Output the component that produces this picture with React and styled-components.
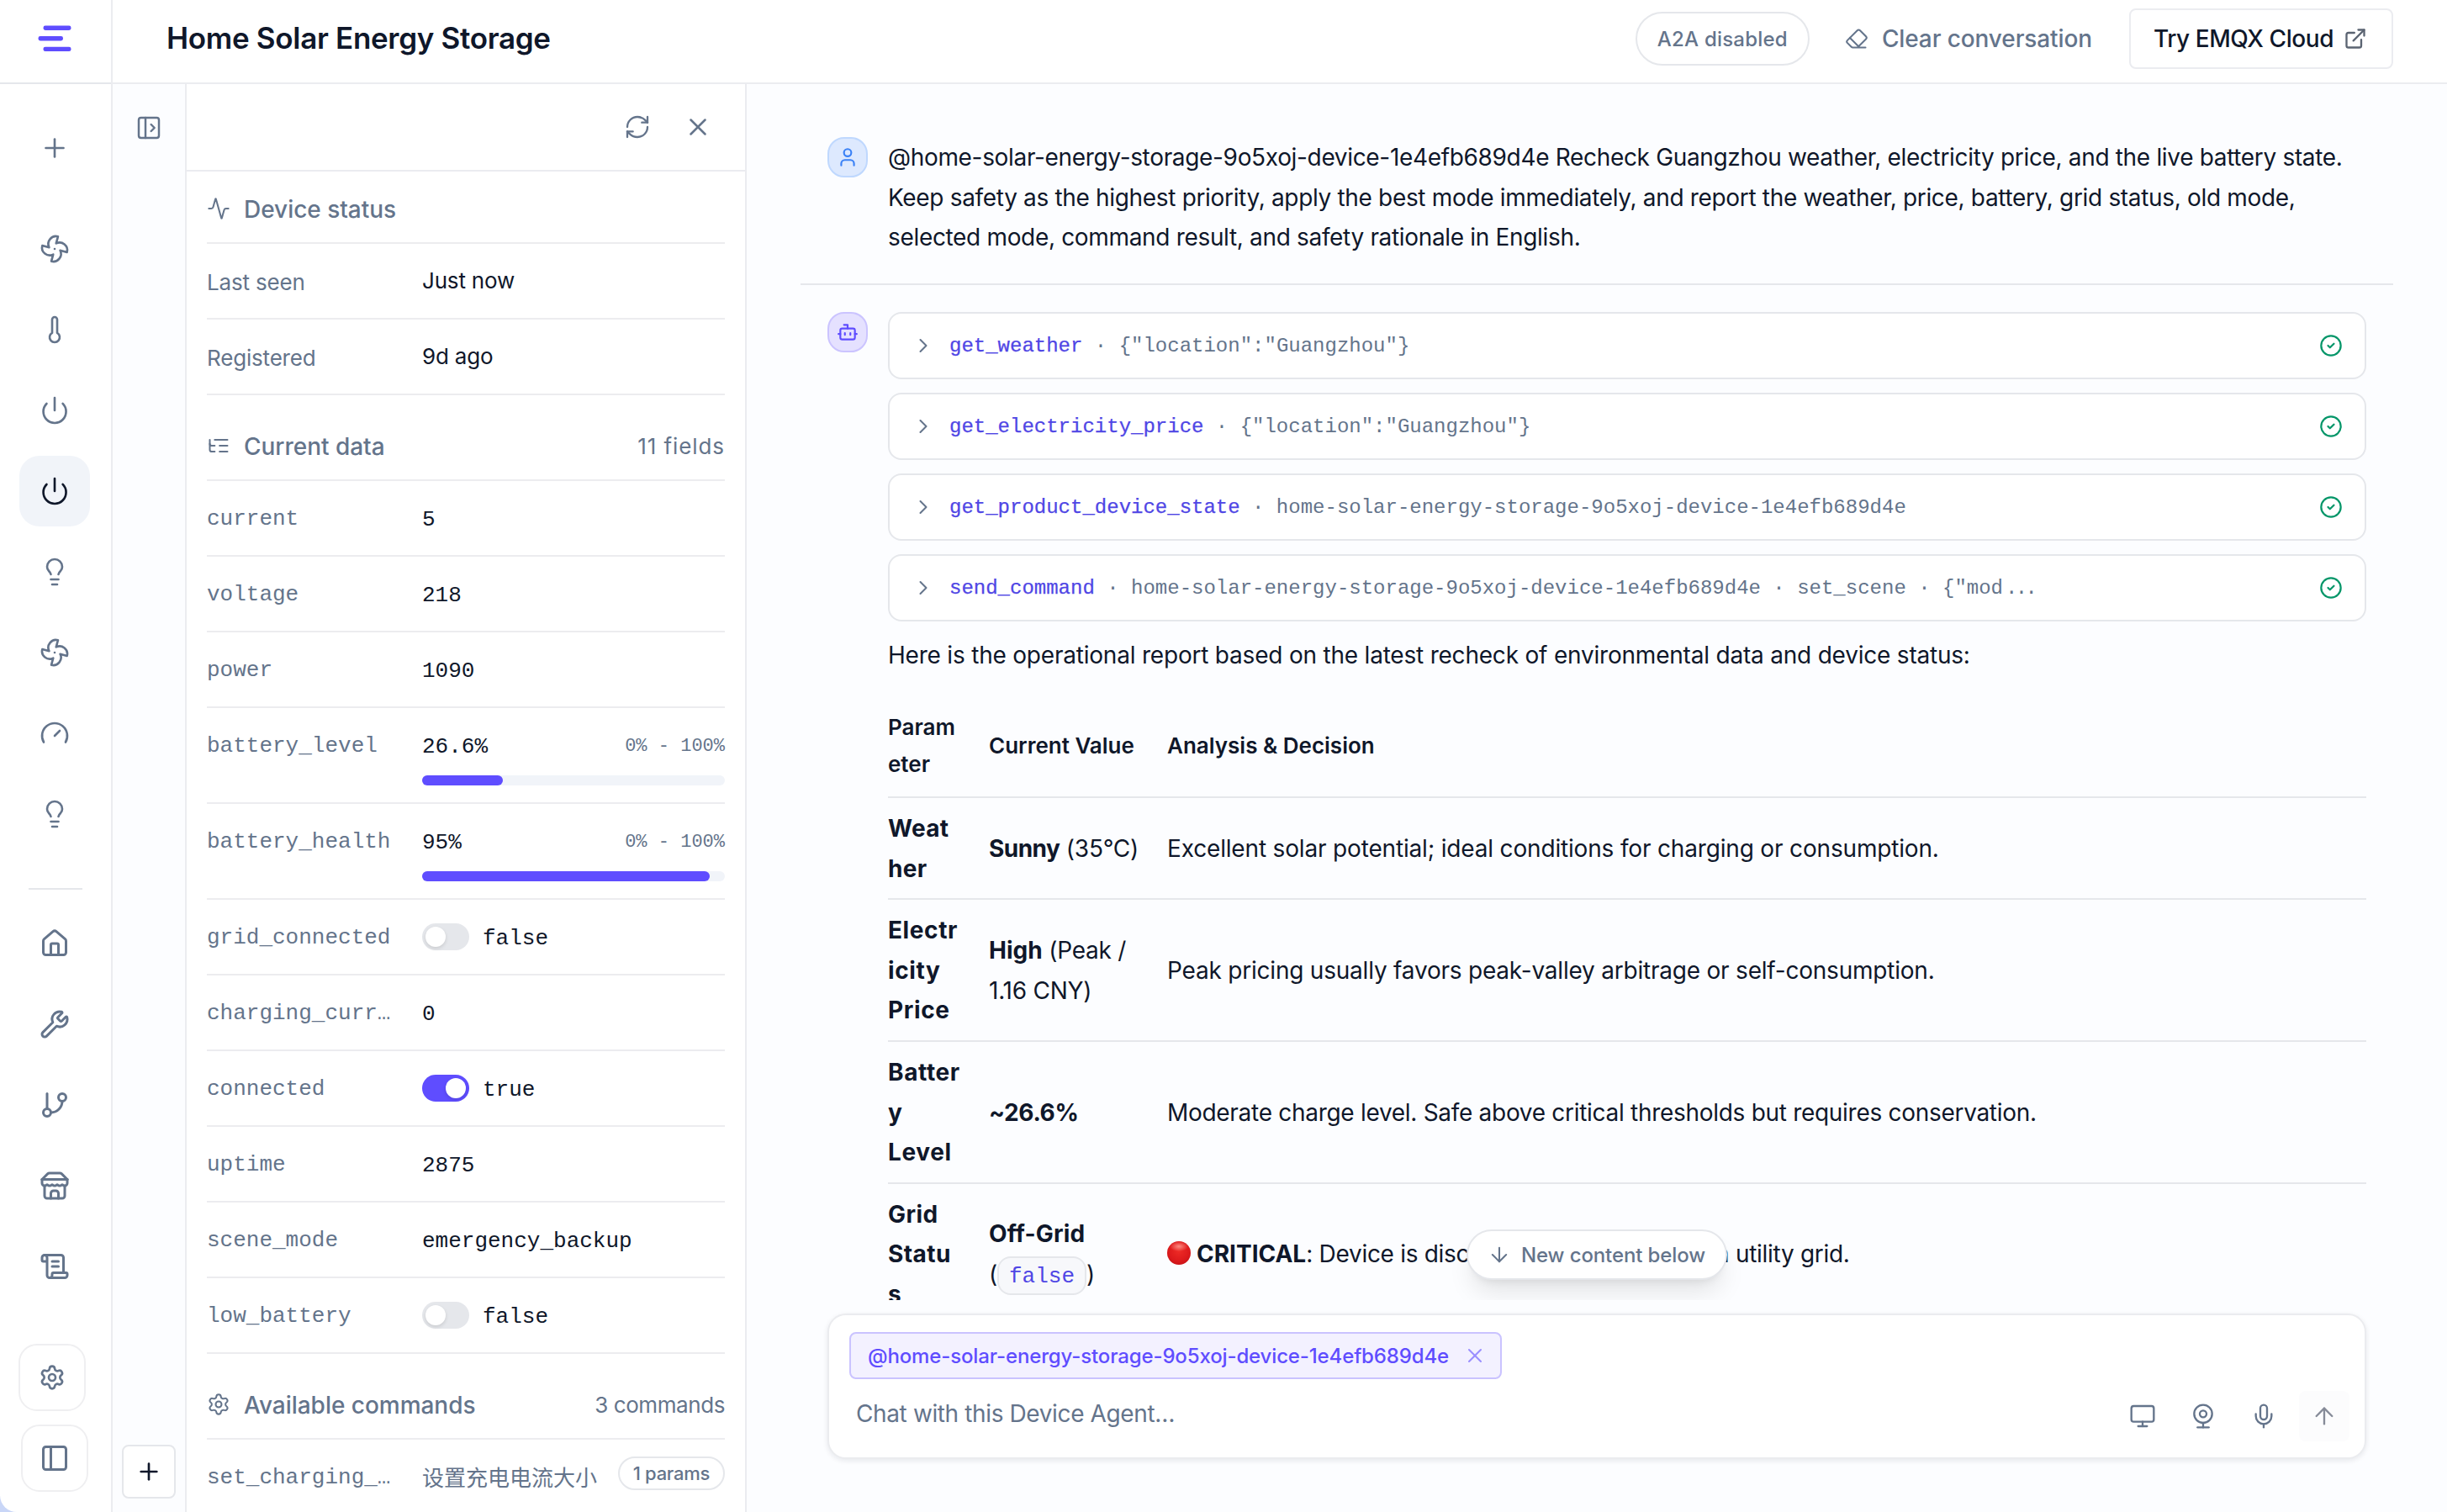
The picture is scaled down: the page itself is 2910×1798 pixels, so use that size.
import React from 'react';
import styled, { createGlobalStyle } from 'styled-components';
import {
  Activity,
  ArrowDown,
  ArrowUp,
  Bot,
  ChevronRight,
  CircleCheck,
  Eraser,
  ExternalLink,
  Fan,
  Gauge,
  House,
  Lightbulb,
  Mic,
  Monitor,
  PanelLeft,
  PanelLeftOpen,
  Plus,
  Power,
  RefreshCw,
  ScrollText,
  Settings,
  Thermometer,
  User,
  Webcam,
  Wrench,
  X,
} from 'lucide-react';

const sans = "'Inter', 'Noto Sans CJK SC', sans-serif";
const mono = "'Liberation Mono', 'Noto Sans CJK SC', monospace";

const color = {
  ink: '#0f172a',
  muted: '#64748b',
  accent: '#5f4dff',
  link: '#4f46e5',
  line: '#e5e7eb',
  softLine: '#ebecf0',
  canvas: '#fcfdff',
  track: '#f1f4f9',
  ok: '#059669',
};

const GlobalStyle = createGlobalStyle`
  * {
    box-sizing: border-box;
  }

  body {
    margin: 0;
    background: #c9d6f7;
    color: ${color.ink};
    font-family: ${sans};
    -webkit-font-smoothing: antialiased;
  }

  svg {
    display: block;
    flex-shrink: 0;
  }
`;

const Shell = styled.div`
  display: flex;
  height: 1798px;
  width: 2910px;
  overflow: hidden;
  background: #fff;
  border-bottom-left-radius: 20px;
`;

/* ---------- sidebar ---------- */

const Sidebar = styled.nav`
  display: flex;
  flex-direction: column;
  width: 134px;
  flex-shrink: 0;
  border-right: 2px solid ${color.softLine};
`;

const LogoBox = styled.div`
  display: flex;
  align-items: center;
  justify-content: center;
  height: 100px;
  padding: 0 2px 6px 0;
  border-bottom: 2px solid ${color.line};
`;

const NavList = styled.div`
  display: flex;
  flex-direction: column;
  align-items: center;
  gap: 12px;
  width: 130px;
  padding-top: ${(p) => p.$top}px;
`;

const NavItem = styled.button`
  display: flex;
  align-items: center;
  justify-content: center;
  width: 84px;
  height: 84px;
  padding: 0;
  border: none;
  border-radius: 24px;
  background: ${(p) => (p.$active ? color.track : 'transparent')};
  color: ${(p) => (p.$active ? color.ink : color.muted)};
`;

const NavDivider = styled.div`
  width: 64px;
  height: 2px;
  margin: 46px 0 0 34px;
  background: ${color.line};
`;

const NavFooter = styled.div`
  display: flex;
  flex-direction: column;
  gap: 16px;
  margin-top: auto;
  padding: 0 0 24px 22px;
`;

const FooterButton = styled.button`
  display: flex;
  align-items: center;
  justify-content: center;
  width: 80px;
  height: 80px;
  margin-left: ${(p) => p.$shift || 0}px;
  padding: 0;
  border: 2px solid #efeff1;
  border-radius: 22px;
  background: #fff;
  color: ${color.muted};
`;

/* ---------- header ---------- */

const Main = styled.div`
  display: flex;
  flex-direction: column;
  flex: 1;
  min-width: 0;
`;

const Header = styled.header`
  display: flex;
  align-items: center;
  height: 100px;
  flex-shrink: 0;
  padding: 0 64px 6px 64px;
  border-bottom: 2px solid ${color.softLine};
`;

const Title = styled.h1`
  margin: -2px auto 0 0;
  font-size: 35px;
  font-weight: 600;
  line-height: 48px;
  letter-spacing: -0.009em;
`;

const StatusPill = styled.span`
  display: flex;
  align-items: center;
  height: 64px;
  padding: 0 24px;
  border: 2px solid ${color.line};
  border-radius: 32px;
  color: ${color.muted};
  font-size: 24px;
  font-weight: 500;
  letter-spacing: 0.009em;
`;

const ClearButton = styled.button`
  display: flex;
  align-items: center;
  gap: 16px;
  margin: 0 44px 0 42px;
  padding: 0;
  border: none;
  background: none;
  color: ${color.muted};
  font: 500 28px ${sans};
  letter-spacing: -0.004em;
`;

const CloudButton = styled.button`
  display: flex;
  align-items: center;
  gap: 12px;
  width: 314px;
  height: 72px;
  padding: 0 0 0 27px;
  border: 2px solid ${color.softLine};
  border-radius: 8px;
  background: #fff;
  color: ${color.ink};
  font: 500 28px ${sans};
  letter-spacing: -0.0155em;

  svg {
    color: #5b6472;
  }
`;

/* ---------- device panel ---------- */

const Body = styled.div`
  display: flex;
  flex: 1;
  min-height: 0;
`;

const Rail = styled.div`
  display: flex;
  flex-direction: column;
  align-items: center;
  justify-content: space-between;
  width: 88px;
  flex-shrink: 0;
  padding: 36px 0 16px;
  border-right: 2px solid ${color.softLine};
  background: ${color.canvas};
  color: ${color.muted};
`;

const AddButton = styled.button`
  display: flex;
  align-items: center;
  justify-content: center;
  width: 64px;
  height: 64px;
  padding: 0;
  border: 2px solid ${color.line};
  border-radius: 8px;
  background: #fff;
  color: ${color.ink};
`;

const Panel = styled.aside`
  width: 666px;
  flex-shrink: 0;
  overflow: hidden;
  border-right: 2px solid ${color.softLine};
`;

const PanelBar = styled.div`
  display: flex;
  align-items: center;
  justify-content: flex-end;
  gap: 39px;
  height: 104px;
  padding-right: 39px;
  border-bottom: 2px solid ${color.softLine};
  color: ${color.muted};
`;

const Section = styled.section`
  padding: ${(p) => (p.$first ? 24 : 40)}px 24px 0;
`;

const SectionHead = styled.div`
  display: flex;
  align-items: center;
  height: 62px;
  padding-bottom: 20px;
  border-bottom: 2px solid #ececef;
  color: ${color.muted};
`;

const SectionTitle = styled.h2`
  margin: 1px auto 0 16px;
  font-size: 28px;
  font-weight: 500;
  letter-spacing: -0.001em;
`;

const SectionCount = styled.span`
  font-size: 26px;
  letter-spacing: ${(p) => p.$tracking}em;
`;

const Row = styled.div`
  display: grid;
  grid-template-columns: 224px 360px;
  column-gap: 32px;
  padding: 24px 0 ${(p) => (p.$bar ? 20 : 24)}px;
  border-bottom: 2px solid #ececef;
  font-family: ${(p) => (p.$plain ? sans : mono)};
  font-size: 26px;
  line-height: 40px;
  letter-spacing: ${(p) => (p.$plain ? '-0.007em' : 0)};
`;

const Label = styled.span`
  margin-bottom: -3px;
  overflow: hidden;
  color: ${color.muted};
  line-height: 43px;
  text-overflow: ellipsis;
  white-space: nowrap;
`;

const Value = styled.div`
  display: flex;
  align-items: center;
  height: 40px;
  gap: 16px;
`;

const ValueText = styled.span`
  margin-top: 3px;
`;

const Range = styled.span`
  margin: 3px 0 0 auto;
  color: ${color.muted};
  font-size: 22px;
`;

const Track = styled.div`
  height: 12px;
  margin-top: 16px;
  border-radius: 6px;
  background: ${color.track};
`;

const Fill = styled.div`
  height: 12px;
  border-radius: 6px;
  background: ${color.accent};
`;

const Switch = styled.span`
  display: flex;
  justify-content: ${(p) => (p.$on ? 'flex-end' : 'flex-start')};
  width: 56px;
  height: 32px;
  padding: 4px;
  border-radius: 16px;
  background: ${(p) => (p.$on ? color.accent : color.line)};

  &::after {
    content: '';
    width: 24px;
    height: 24px;
    border-radius: 50%;
    background: #fff;
    box-shadow: 0 2px 4px rgba(0, 0, 0, 0.12);
  }
`;

const CommandText = styled.span`
  width: 210px;
  color: ${color.muted};
  font-family: 'Noto Sans CJK SC', sans-serif;
  white-space: nowrap;
`;

const ParamsPill = styled.span`
  display: flex;
  align-items: center;
  height: 40px;
  margin: -8px 0 0 auto;
  padding: 0 16px;
  border: 2px solid ${color.line};
  border-radius: 20px;
  color: ${color.muted};
  font: 500 22px ${sans};
  letter-spacing: -0.013em;
  white-space: nowrap;
`;

/* ---------- conversation ---------- */

const Chat = styled.main`
  display: flex;
  flex-direction: column;
  flex: 1;
  min-width: 0;
  background: ${color.canvas};
`;

const Thread = styled.div`
  position: relative;
  height: 1446px;
  padding: 63px 64px 0;
  overflow: hidden;
`;

const Message = styled.article`
  display: flex;
  gap: 24px;
  padding: 0 32px;

  & + & {
    padding-top: 32px;
    border-top: 2px solid ${color.line};
  }
`;

const Avatar = styled.div`
  display: flex;
  align-items: center;
  justify-content: center;
  width: 48px;
  height: 48px;
  flex-shrink: 0;
  border: 2px solid ${(p) => (p.$bot ? '#cbc4ff' : '#bfd8fe')};
  border-radius: 20px;
  background: ${(p) => (p.$bot ? '#e5e1ff' : '#dde9fe')};
  color: ${(p) => (p.$bot ? color.accent : '#3b82f6')};
`;

const Bubble = styled.div`
  flex: 1;
  min-width: 0;
  font-size: 28px;
  line-height: 47.6px;
`;

const Prompt = styled.p`
  margin: 0;
  padding: 1px 0 30.2px;
  letter-spacing: -0.0118em;
`;

const ToolCall = styled.div`
  display: flex;
  align-items: center;
  height: 80px;
  margin-bottom: 16px;
  padding: 0 26px;
  border: 2px solid ${color.line};
  border-radius: 16px;
  background: #fff;
  color: ${color.muted};
  font-family: ${mono};
  font-size: 24px;
  line-height: 40px;
  white-space: pre;

  svg:last-child {
    margin-left: auto;
    color: ${color.ok};
  }
`;

const ToolName = styled.span`
  margin: 3px 0 0 17px;
  color: ${color.link};
  -webkit-text-stroke: 0.25px ${color.link};
`;

const ToolArgs = styled.span`
  margin-top: 3px;
`;

const Ellipsis = styled.span`
  margin: 3px 0 0 3px;
  letter-spacing: -2.6px;
`;

const Report = styled.p`
  margin: 0;
  padding: 1px 0 23px;
  letter-spacing: -0.0074em;
`;

const Table = styled.table`
  width: 100%;
  border-collapse: collapse;
  table-layout: fixed;

  th,
  td {
    border-bottom: 2px solid ${color.line};
    text-align: left;
    vertical-align: middle;
    white-space: pre-line;
  }
`;

const Col = styled.col`
  width: ${(p) => p.$width};
`;

const HeadCell = styled.th`
  padding: 16px 16px 16px 0;
  font-size: 26px;
  font-weight: 600;
  line-height: 44.2px;
`;

const Cell = styled.td`
  padding: 13px 16px 11px 0;
  letter-spacing: ${(p) => p.$tracking ?? -0.0085}em;
`;

const Strong = styled.strong`
  font-weight: 700;
  letter-spacing: ${(p) => p.$tracking || 0}em;
`;

const Code = styled.code`
  display: inline-block;
  height: 46px;
  padding: 2px 12px 0;
  border: 2px solid ${color.line};
  border-radius: 16px;
  background: #f7f8fb;
  color: ${color.link};
  font-family: ${mono};
  font-size: 26px;
  line-height: 40px;
  letter-spacing: 0;
`;

const RedDot = styled.i`
  display: inline-block;
  width: 28px;
  height: 28px;
  margin-right: 7px;
  border-radius: 50%;
  background:
    radial-gradient(ellipse 11px 6px at 50% 22%, rgba(255, 150, 140, 0.9), rgba(255, 120, 110, 0) 100%),
    radial-gradient(circle at 50% 40%, #ee2b26 0%, #dd1a1c 55%, #b90d14 100%);
  vertical-align: -3px;
`;

const JumpButton = styled.button`
  position: absolute;
  bottom: 24px;
  left: 50%;
  display: flex;
  align-items: center;
  gap: 12px;
  width: 310px;
  height: 60px;
  padding: 0 0 0 23px;
  transform: translateX(-50%);
  border: 2px solid ${color.line};
  border-radius: 30px;
  background: #fff;
  box-shadow: 0 20px 30px -6px rgba(0, 0, 0, 0.1), 0 8px 12px -8px rgba(0, 0, 0, 0.1);
  color: ${color.muted};
  font: 500 24px ${sans};
  letter-spacing: -0.005em;
  white-space: nowrap;
`;

/* ---------- composer ---------- */

const Composer = styled.div`
  display: flex;
  flex-direction: column;
  align-items: flex-start;
  height: 173px;
  margin: 16px 96px 0;
  padding: 20px 18px 0 24px;
  border: 2px solid #ebecef;
  border-radius: 22px;
  background: #fff;
  box-shadow: 0 2px 6px rgba(15, 23, 42, 0.09);
`;

const Mention = styled.span`
  display: flex;
  align-items: center;
  justify-content: space-between;
  width: 776px;
  height: 56px;
  padding: 0 16px 0 20px;
  border: 2px solid #cac3ff;
  border-radius: 8px;
  background: #f3f1ff;
  color: ${color.accent};
  font-size: 24px;
  font-weight: 500;
  letter-spacing: -0.0057em;

  svg {
    color: #9a8fff;
  }
`;

const ComposerRow = styled.div`
  display: flex;
  align-items: center;
  gap: 12px;
  width: 100%;
  padding-top: 14px;
`;

const Placeholder = styled.span`
  margin: -6px auto 0 8px;
  color: ${color.muted};
  font-size: 28px;
  letter-spacing: -0.0135em;
`;

const ToolButton = styled.button`
  display: flex;
  align-items: center;
  justify-content: center;
  width: 60px;
  height: 60px;
  padding: 0;
  border: none;
  border-radius: 8px;
  background: ${(p) => (p.$send ? '#fcfcfd' : 'transparent')};
  color: ${(p) => (p.$send ? '#868b98' : color.muted)};
`;

/* ---------- icons ---------- */

function LineIcon({ size = 24, strokeWidth = 2, children }) {
  return (
    <svg
      width={size}
      height={size}
      viewBox="0 0 24 24"
      fill="none"
      stroke="currentColor"
      strokeWidth={strokeWidth}
      strokeLinecap="round"
      strokeLinejoin="round"
    >
      {children}
    </svg>
  );
}

const BranchIcon = (props) => (
  <LineIcon {...props}>
    <path d="M6 3v12" />
    <circle cx="18" cy="6" r="3" />
    <circle cx="6" cy="18" r="3" />
    <path d="M18 9a9 9 0 0 1-9 9" />
  </LineIcon>
);

const StoreIcon = (props) => (
  <LineIcon {...props}>
    <path d="m2 7 4.41-4.41A2 2 0 0 1 7.83 2h8.34a2 2 0 0 1 1.42.59L22 7" />
    <path d="M4 12v8a2 2 0 0 0 2 2h12a2 2 0 0 0 2-2v-8" />
    <path d="M15 22v-4a2 2 0 0 0-2-2h-2a2 2 0 0 0-2 2v4" />
    <path d="M2 7h20" />
    <path d="M22 7v3a2 2 0 0 1-2 2a2.7 2.7 0 0 1-1.59-.63.7.7 0 0 0-.82 0A2.7 2.7 0 0 1 16 12a2.7 2.7 0 0 1-1.59-.63.7.7 0 0 0-.82 0A2.7 2.7 0 0 1 12 12a2.7 2.7 0 0 1-1.59-.63.7.7 0 0 0-.82 0A2.7 2.7 0 0 1 8 12a2.7 2.7 0 0 1-1.59-.63.7.7 0 0 0-.82 0A2.7 2.7 0 0 1 4 12a2 2 0 0 1-2-2V7" />
  </LineIcon>
);

const TreeIcon = (props) => (
  <LineIcon {...props}>
    <path d="M21 12h-8" />
    <path d="M21 6H8" />
    <path d="M21 18h-8" />
    <path d="M3 6v4c0 1.1.9 2 2 2h3" />
    <path d="M3 10v6c0 1.1.9 2 2 2h3" />
  </LineIcon>
);

const Logo = () => (
  <svg width="40" height="32" viewBox="0 0 40 32" fill={color.accent}>
    <rect x="6.5" y="0.5" width="33" height="5.4" rx="2.4" />
    <rect x="0.5" y="13" width="29.5" height="5.4" rx="2.4" />
    <rect x="6.5" y="25.7" width="33" height="5.4" rx="2.4" />
  </svg>
);

const devices = [Fan, Thermometer, Power, Power, Lightbulb, Fan, Gauge, Lightbulb];
const pages = [House, Wrench, BranchIcon, StoreIcon, ScrollText];
const activeDevice = 3;

const fields = [
  { name: 'current', value: '5' },
  { name: 'voltage', value: '218' },
  { name: 'power', value: '1090' },
  { name: 'battery_level', value: '26.6%', percent: 26.6 },
  { name: 'battery_health', value: '95%', percent: 95 },
  { name: 'grid_connected', value: false },
  { name: 'charging_current', value: '0' },
  { name: 'connected', value: true },
  { name: 'uptime', value: '2875' },
  { name: 'scene_mode', value: 'emergency_backup' },
  { name: 'low_battery', value: false },
];

const toolCalls = [
  { name: 'get_weather', args: ' · {"location":"Guangzhou"}' },
  { name: 'get_electricity_price', args: ' · {"location":"Guangzhou"}' },
  { name: 'get_product_device_state', args: ' · home-solar-energy-storage-9o5xoj-device-1e4efb689d4e' },
  {
    name: 'send_command',
    args: ' · home-solar-energy-storage-9o5xoj-device-1e4efb689d4e · set_scene · {"mod',
    cut: true,
  },
];

function Field({ name, value, percent }) {
  const hasBar = percent !== undefined;
  const isBool = typeof value === 'boolean';

  return (
    <Row $bar={hasBar}>
      <Label>{name}</Label>
      <div>
        <Value>
          {isBool && <Switch $on={value} />}
          <ValueText>{String(value)}</ValueText>
          {hasBar && <Range>0% - 100%</Range>}
        </Value>
        {hasBar && (
          <Track>
            <Fill style={{ width: `${percent}%` }} />
          </Track>
        )}
      </div>
    </Row>
  );
}

function DevicePanel() {
  return (
    <Panel>
      <PanelBar>
        <RefreshCw size={32} strokeWidth={1.75} />
        <X size={34} strokeWidth={1.75} />
      </PanelBar>

      <Section $first>
        <SectionHead>
          <Activity size={28} strokeWidth={1.75} />
          <SectionTitle>Device status</SectionTitle>
        </SectionHead>
        <Row $plain>
          <Label>Last seen</Label>
          <Value>Just now</Value>
        </Row>
        <Row $plain>
          <Label>Registered</Label>
          <Value>9d ago</Value>
        </Row>
      </Section>

      <Section>
        <SectionHead>
          <TreeIcon size={28} strokeWidth={1.75} />
          <SectionTitle>Current data</SectionTitle>
          <SectionCount $tracking={0.035}>11 fields</SectionCount>
        </SectionHead>
        {fields.map((field) => (
          <Field key={field.name} {...field} />
        ))}
      </Section>

      <Section>
        <SectionHead>
          <Settings size={28} strokeWidth={1.75} />
          <SectionTitle>Available commands</SectionTitle>
          <SectionCount $tracking={-0.016}>3 commands</SectionCount>
        </SectionHead>
        <Row>
          <Label>set_charging_current</Label>
          <Value>
            <CommandText>设置充电电流大小</CommandText>
            <ParamsPill>1 params</ParamsPill>
          </Value>
        </Row>
      </Section>
    </Panel>
  );
}

function ReportTable() {
  return (
    <Table>
      <colgroup>
        <Col $width="120px" />
        <Col $width="212px" />
        <Col $width="auto" />
      </colgroup>
      <thead>
        <tr>
          <HeadCell>{'Param\neter'}</HeadCell>
          <HeadCell>Current Value</HeadCell>
          <HeadCell>Analysis &amp; Decision</HeadCell>
        </tr>
      </thead>
      <tbody>
        <tr>
          <Cell><Strong $tracking={0.01}>{'Weat\nher'}</Strong></Cell>
          <Cell><Strong $tracking={-0.02}>Sunny</Strong> (35°C)</Cell>
          <Cell $tracking={-0.006}>
            Excellent solar potential; ideal conditions for charging or consumption.
          </Cell>
        </tr>
        <tr>
          <Cell><Strong $tracking={0.022}>{'Electr\nicity\nPrice'}</Strong></Cell>
          <Cell><Strong>High</Strong>{' (Peak /\n1.16 CNY)'}</Cell>
          <Cell $tracking={-0.0075}>
            Peak pricing usually favors peak-valley arbitrage or self-consumption.
          </Cell>
        </tr>
        <tr>
          <Cell><Strong $tracking={0.022}>{'Batter\ny\nLevel'}</Strong></Cell>
          <Cell><Strong $tracking={-0.012}>~26.6%</Strong></Cell>
          <Cell $tracking={-0.0105}>
            Moderate charge level. Safe above critical thresholds but requires conservation.
          </Cell>
        </tr>
        <tr>
          <Cell><Strong $tracking={0.015}>{'Grid\nStatu\ns'}</Strong></Cell>
          <Cell><Strong $tracking={0.005}>Off-Grid</Strong>{'\n('}<Code>false</Code>)</Cell>
          <Cell $tracking={-0.0105}>
            <RedDot /><Strong>CRITICAL</Strong>: Device is disconnected from the main utility grid.
          </Cell>
        </tr>
      </tbody>
    </Table>
  );
}

function Conversation() {
  return (
    <Chat>
      <Thread>
        <Message>
          <Avatar>
            <User size={26} />
          </Avatar>
          <Bubble>
            <Prompt>
              @home-solar-energy-storage-9o5xoj-device-1e4efb689d4e Recheck Guangzhou weather, electricity price,
              and the live battery state. Keep safety as the highest priority, apply the best mode immediately, and
              report the weather, price, battery, grid status, old mode, selected mode, command result, and safety
              rationale in English.
            </Prompt>
          </Bubble>
        </Message>
        <Message>
          <Avatar $bot>
            <Bot size={26} />
          </Avatar>
          <Bubble>
            {toolCalls.map((call) => (
              <ToolCall key={call.name}>
                <ChevronRight size={28} strokeWidth={1.75} />
                <ToolName>{call.name}</ToolName>
                <ToolArgs>{call.args}</ToolArgs>
                {call.cut && <Ellipsis>...</Ellipsis>}
                <CircleCheck size={28} strokeWidth={1.9} />
              </ToolCall>
            ))}
            <Report>
              Here is the operational report based on the latest recheck of environmental data and device status:
            </Report>
            <ReportTable />
          </Bubble>
        </Message>
        <JumpButton>
          <ArrowDown size={28} strokeWidth={1.75} />
          New content below
        </JumpButton>
      </Thread>

      <Composer>
        <Mention>
          @home-solar-energy-storage-9o5xoj-device-1e4efb689d4e
          <X size={28} strokeWidth={1.75} />
        </Mention>
        <ComposerRow>
          <Placeholder>Chat with this Device Agent…</Placeholder>
          <ToolButton><Monitor size={32} strokeWidth={1.75} /></ToolButton>
          <ToolButton><Webcam size={32} strokeWidth={1.75} /></ToolButton>
          <ToolButton><Mic size={32} strokeWidth={1.75} /></ToolButton>
          <ToolButton $send><ArrowUp size={32} strokeWidth={1.75} /></ToolButton>
        </ComposerRow>
      </Composer>
    </Chat>
  );
}

export default function App() {
  return (
    <>
      <GlobalStyle />
      <Shell>
        <Sidebar>
          <LogoBox>
            <Logo />
          </LogoBox>
          <NavList $top={34}>
            <NavItem><Plus size={36} strokeWidth={1.75} /></NavItem>
          </NavList>
          <NavList $top={36}>
            {devices.map((Icon, i) => (
              <NavItem key={i} $active={i === activeDevice}>
                <Icon size={36} strokeWidth={1.75} />
              </NavItem>
            ))}
          </NavList>
          <NavDivider />
          <NavList $top={22}>
            {pages.map((Icon, i) => (
              <NavItem key={i}>
                <Icon size={36} />
              </NavItem>
            ))}
          </NavList>
          <NavFooter>
            <FooterButton><Settings size={32} /></FooterButton>
            <FooterButton $shift={3}><PanelLeft size={36} /></FooterButton>
          </NavFooter>
        </Sidebar>

        <Main>
          <Header>
            <Title>Home Solar Energy Storage</Title>
            <StatusPill>A2A disabled</StatusPill>
            <ClearButton>
              <Eraser size={28} strokeWidth={1.75} />
              Clear conversation
            </ClearButton>
            <CloudButton>
              Try EMQX Cloud
              <ExternalLink size={28} />
            </CloudButton>
          </Header>
          <Body>
            <Rail>
              <PanelLeftOpen size={32} strokeWidth={1.85} />
              <AddButton><Plus size={32} /></AddButton>
            </Rail>
            <DevicePanel />
            <Conversation />
          </Body>
        </Main>
      </Shell>
    </>
  );
}
